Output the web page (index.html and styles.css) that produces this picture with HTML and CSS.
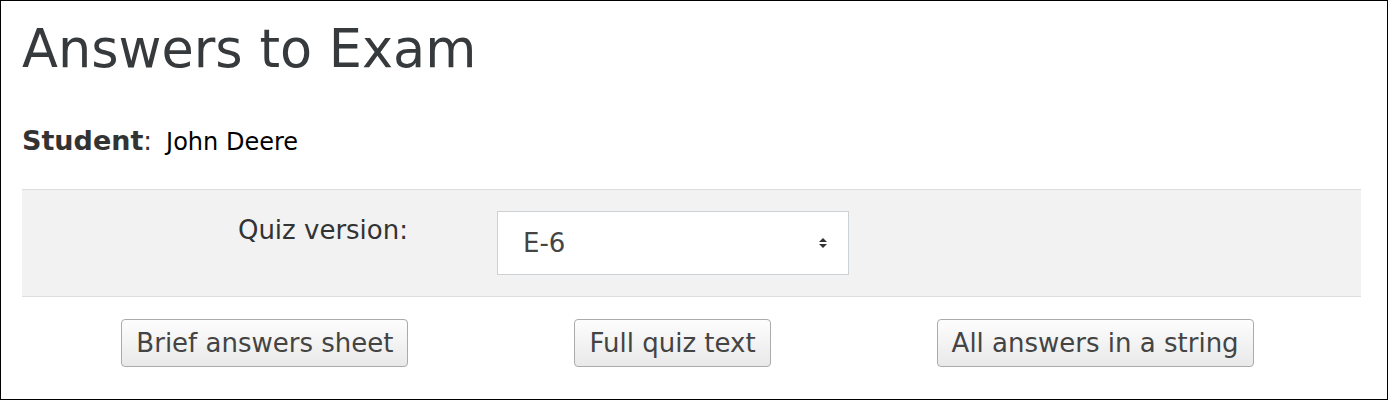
FILE: index.html
```html
<!DOCTYPE html>
<html>
<head>
<meta charset="utf-8">
<link rel="stylesheet" href="styles.css">
</head>
<body>
<div class="frame">
  <h1 class="title">Answers to Exam</h1>
  <div class="student"><b class="student-label">Student</b><span class="colon">:</span><span class="student-name">John Deere</span></div>
  <div class="band">
    <label class="band-label" for="ver">Quiz version:</label>
    <div class="select-wrap">
      <select id="ver" class="select"><option>E-6</option></select>
      <svg class="arrows" width="8" height="10" viewBox="0 0 8 10"><path d="M4 0 L8 4 L0 4 Z M0 6 L8 6 L4 10 Z" fill="#333"/></svg>
    </div>
  </div>
  <div class="buttons">
    <button class="btn">Brief answers sheet</button>
    <button class="btn">Full quiz text</button>
    <button class="btn">All answers in a string</button>
  </div>
</div>
</body>
</html>
```
FILE: styles.css
```css
html, body {
  margin: 0;
  padding: 0;
  background: #fff;
}
.frame {
  box-sizing: border-box;
  width: 1388px;
  height: 400px;
  border: 1px solid #000;
  padding: 17px 26px 0 21px;
  font-family: "DejaVu Sans", sans-serif;
  font-size: 26px;
  color: #333;
  overflow: hidden;
}
.title {
  margin: 0;
  font-size: 52.5px;
  font-weight: normal;
  line-height: 61px;
  color: #363a3c;
  white-space: nowrap;
}
.student {
  margin-top: 47px;
  line-height: 30px;
  height: 30px;
}
.student-label {
  font-weight: bold;
  font-size: 27px;
  color: #333;
}
.colon {
  color: #333;
}
.student-name {
  font-size: 24px;
  color: #000;
  margin-left: 14px;
}
.band {
  margin-top: 33px;
  background: #f2f2f2;
  border-top: 1px solid #dedede;
  border-bottom: 1px solid #dedede;
  padding: 21px 0;
  display: grid;
  grid-template-columns: 386px 352px;
  column-gap: 89px;
  align-items: start;
}
.band-label {
  text-align: right;
  padding-top: 4px;
  line-height: 30px;
  color: #333;
}
.select-wrap {
  position: relative;
  height: 64px;
}
.select {
  appearance: none;
  -webkit-appearance: none;
  box-sizing: border-box;
  width: 352px;
  height: 64px;
  margin: 0;
  border: 1px solid #ccd1d6;
  border-radius: 0;
  background: #fff;
  padding: 0 40px 0 25px;
  font-family: "DejaVu Sans", sans-serif;
  font-size: 26px;
  color: #444;
  outline: none;
}
.arrows {
  position: absolute;
  left: 322px;
  top: 27px;
}
.buttons {
  margin-top: 22px;
  display: flex;
  justify-content: center;
  gap: 166px;
  padding-right: 8px;
}
.btn {
  box-sizing: border-box;
  height: 48px;
  margin: 0;
  padding: 0 14px;
  border: 1px solid #ababab;
  border-radius: 4px;
  background: linear-gradient(#fdfdfd, #e9e9e9);
  font-family: "DejaVu Sans", sans-serif;
  font-size: 26px;
  line-height: 30px;
  color: #444;
}
```
